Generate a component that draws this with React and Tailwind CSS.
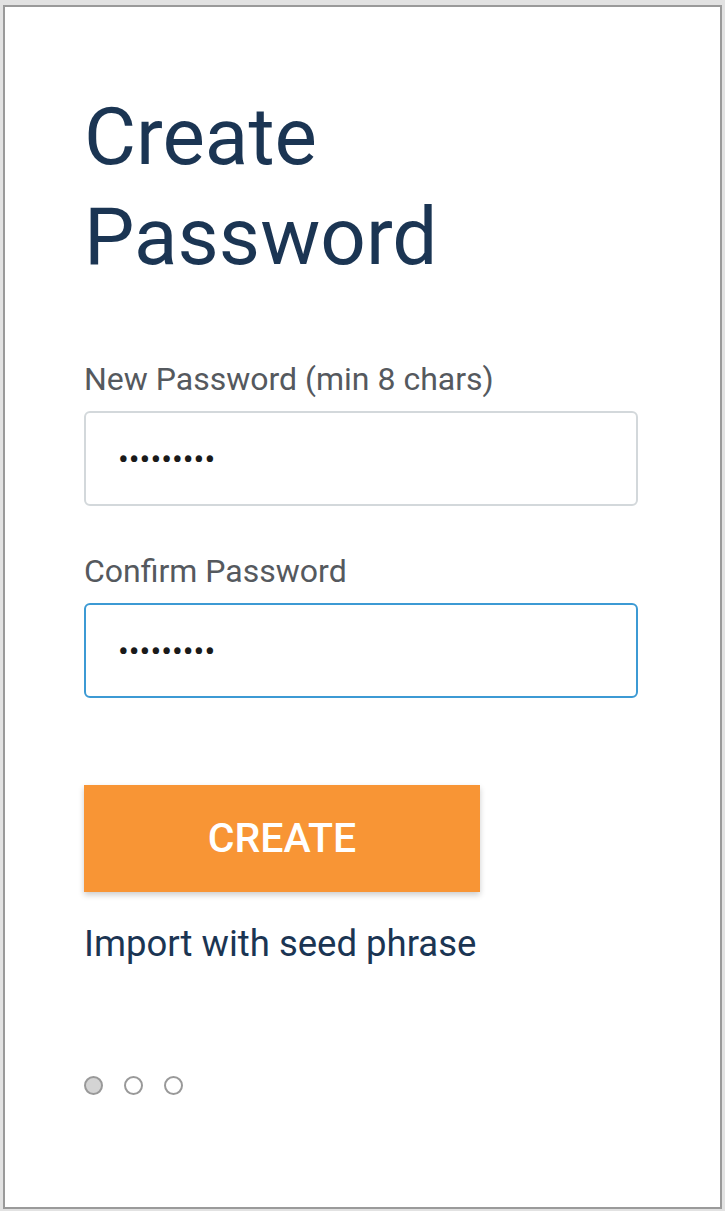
import React from 'react';

const font = { fontFamily: 'Roboto, "Noto Sans", sans-serif' };

function Field({ label, focused }) {
  return (
    <div className="flex flex-col">
      <label className="text-[32px] leading-[37px] text-[#55595e]">{label}</label>
      <input
        type="password"
        readOnly
        defaultValue="123456789"
        className={`mt-[13px] h-[95px] w-[554px] rounded-[6px] border-2 bg-white pl-[32px] text-[32px] text-[#1a1a1a] outline-none ${
          focused ? 'border-[#3c9ad4]' : 'border-[#d3d8db]'
        }`}
        style={font}
      />
    </div>
  );
}

export default function App() {
  return (
    <div className="h-[1211px] w-[725px] overflow-hidden bg-[#e2e2e2] pl-[3px] pt-[5px]" style={font}>
      <div className="flex h-[1204px] w-[719px] flex-col border-2 border-[#9a9a9a] bg-white pl-[79px] pt-[80px]">
        <h1 className="text-[80px] font-normal leading-[100px] text-[#1b3553]">
          Create
          <br />
          Password
        </h1>

        <div className="mt-[74px]">
          <Field label="New Password (min 8 chars)" />
        </div>
        <div className="mt-[47px]">
          <Field label="Confirm Password" focused />
        </div>

        <button className="mt-[87px] h-[107px] w-[396px] bg-[#f89535] text-[41px] font-medium text-white shadow-[0_3px_6px_rgba(0,0,0,0.2)]">
          CREATE
        </button>

        <a className="mt-[31px] text-[36.5px] leading-[42px] text-[#1b3553]">Import with seed phrase</a>

        <div className="mt-[111px] flex gap-[21px]">
          <span className="h-[19px] w-[19px] rounded-full border-2 border-[#999] bg-[#d4d4d4]" />
          <span className="h-[19px] w-[19px] rounded-full border-2 border-[#999]" />
          <span className="h-[19px] w-[19px] rounded-full border-2 border-[#999]" />
        </div>
      </div>
    </div>
  );
}
